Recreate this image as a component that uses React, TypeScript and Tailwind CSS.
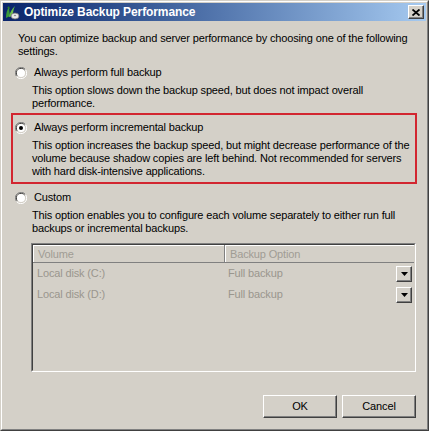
import React from "react";

const font = { fontFamily: '"Liberation Sans", Arial, sans-serif' };

const Radio: React.FC<{ checked?: boolean }> = ({ checked }) => (
  <svg width="12" height="12" viewBox="0 0 12 12" className="shrink-0">
    <path d="M10.5 2.5 A5.5 5.5 0 0 0 1.5 9.5" fill="none" stroke="#808080" strokeWidth="1" />
    <path d="M9.7 3.2 A4.5 4.5 0 0 0 2.3 8.8" fill="none" stroke="#404040" strokeWidth="1" />
    <circle cx="6" cy="6" r="4" fill="#ffffff" />
    <path d="M1.5 9.5 A5.5 5.5 0 0 0 10.5 2.5" fill="none" stroke="#ffffff" strokeWidth="1" />
    {checked && <circle cx="6" cy="6" r="2" fill="#000000" />}
  </svg>
);

const DropButton: React.FC = () => (
  <div className="flex h-[16px] w-[16px] items-center justify-center border border-t-white border-l-white border-r-[#404040] border-b-[#404040] bg-[#d4d0c8] shadow-[inset_-1px_-1px_0_#808080]">
    <svg width="7" height="4" viewBox="0 0 7 4">
      <path d="M0 0 H7 L3.5 4 Z" fill="#000" />
    </svg>
  </div>
);

const WinButton: React.FC<{ label: string }> = ({ label }) => (
  <button className="flex h-[23px] w-[74px] items-center justify-center border border-t-white border-l-white border-r-[#404040] border-b-[#404040] bg-[#d4d0c8] text-[11px] text-black shadow-[inset_-1px_-1px_0_#808080]">
    {label}
  </button>
);

const App: React.FC = () => {
  return (
    <div style={font} className="h-[431px] w-[429px] border border-t-[#d4d0c8] border-l-[#d4d0c8] border-r-[#404040] border-b-[#404040] bg-[#d4d0c8]">
      <div className="flex h-full flex-col border border-t-white border-l-white border-r-[#808080] border-b-[#808080] p-[1px]">
        {/* title bar */}
        <div className="flex h-[18px] shrink-0 items-center bg-linear-to-r from-[#0a246a] to-[#a6caf0] pl-[1px] pr-[2px]">
          <svg width="16" height="16" viewBox="0 0 16 16" className="shrink-0">
            <path d="M2 14 C2 9 3 6 5 3 C5 7 6 9 6 12 Z" fill="#3a9a3a" />
            <path d="M5 13 C6 8 8 5 11 2 C9 6 9 9 9 12 Z" fill="#6cc04a" />
            <path d="M3 4 L5 2 L6 5 Z" fill="#2d7a2d" />
            <ellipse cx="11" cy="12" rx="4" ry="3" fill="#e8e8e8" stroke="#707070" strokeWidth="0.8" />
            <ellipse cx="11" cy="11.5" rx="1.2" ry="0.8" fill="#909090" />
          </svg>
          <span className="ml-[4px] text-[12px] font-bold tracking-[-0.1px] text-white">Optimize Backup Performance</span>
          <div className="ml-auto flex h-[14px] w-[16px] items-center justify-center border border-t-white border-l-white border-r-[#404040] border-b-[#404040] bg-[#d4d0c8] shadow-[inset_-1px_-1px_0_#808080]">
            <svg width="8" height="7" viewBox="0 0 8 7">
              <path d="M0.5 0.5 L7.5 6.5 M7.5 0.5 L0.5 6.5" stroke="#000" strokeWidth="1.8" />
            </svg>
          </div>
        </div>

        {/* body */}
        <div className="flex flex-1 flex-col pl-[12px] pr-[10px] text-[11px] leading-[13px] tracking-[-0.15px] text-black">
          <div className="mt-[11px] pl-[3px]">
            <div className="whitespace-nowrap">You can optimize backup and server performance by choosing one of the following</div>
            <div>settings.</div>
          </div>

          <div className="mt-[8px] flex items-center gap-[7px]">
            <Radio />
            <span>Always perform full backup</span>
          </div>
          <div className="mt-[5px] pl-[17px]">
            <div className="whitespace-nowrap">This option slows down the backup speed, but does not impact overall</div>
            <div>performance.</div>
          </div>

          <div className="-ml-[4px] -mr-[1px] mt-[3px] border-2 border-[#d22630] pb-[4px] pl-[2px] pt-[6px]">
            <div className="flex items-center gap-[7px]">
              <Radio checked />
              <span>Always perform incremental backup</span>
            </div>
            <div className="mt-[5px] pl-[17px]">
              <div className="whitespace-nowrap">This option increases the backup speed, but might decrease performance of the</div>
              <div className="whitespace-nowrap">volume because shadow copies are left behind. Not recommended for servers</div>
              <div>with hard disk-intensive applications.</div>
            </div>
          </div>

          <div className="mt-[7px] flex items-center gap-[7px]">
            <Radio />
            <span>Custom</span>
          </div>
          <div className="mt-[5px] pl-[17px]">
            <div className="whitespace-nowrap">This option enables you to configure each volume separately to either run full</div>
            <div>backups or incremental backups.</div>
          </div>

          {/* table */}
          <div className="ml-[16px] mt-[8px] h-[129px] border border-t-[#808080] border-l-[#808080] border-r-white border-b-white">
            <div className="h-full border border-t-[#404040] border-l-[#404040] border-r-[#d4d0c8] border-b-[#d4d0c8] text-[#a09c94]">
              <div className="flex h-[18px] border-b border-[#808080]">
                <div className="flex w-[191px] items-center border-t border-l border-t-white border-l-white pl-[4px]">Volume</div>
                <div className="w-[1px] bg-[#808080]" />
                <div className="flex flex-1 items-center border-t border-l border-t-white border-l-white pl-[4px]">Backup Option</div>
              </div>
              <div className="flex h-[21px] items-center">
                <div className="w-[192px] pl-[4px] text-[#9a968e]">Local disk (C:)</div>
                <div className="flex-1 pl-[3px] text-[#9a968e]">Full backup</div>
                <div className="mr-[2px]"><DropButton /></div>
              </div>
              <div className="flex h-[21px] items-center">
                <div className="w-[192px] pl-[4px] text-[#9a968e]">Local disk (D:)</div>
                <div className="flex-1 pl-[3px] text-[#9a968e]">Full backup</div>
                <div className="mr-[2px]"><DropButton /></div>
              </div>
            </div>
          </div>

          <div className="mt-auto mb-[10px] flex justify-end gap-[5px]">
            <WinButton label="OK" />
            <WinButton label="Cancel" />
          </div>
        </div>
      </div>
    </div>
  );
};

export default App;
